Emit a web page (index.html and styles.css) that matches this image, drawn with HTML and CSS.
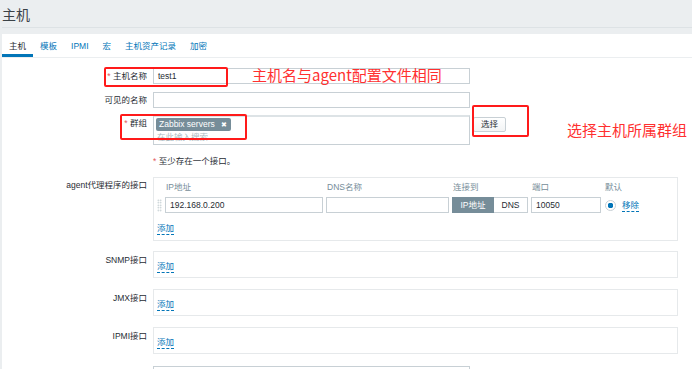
FILE: index.html
```html
<!DOCTYPE html>
<html lang="zh-CN">
<head>
<meta charset="utf-8">
<title>主机</title>
<link rel="stylesheet" href="styles.css">
</head>
<body>
<header class="hdr">
  <div class="hdr-bar"><h1 class="title">主机</h1></div>
</header>
<main class="panel">
  <nav class="tabs">
    <span class="tab active">主机</span>
    <span class="tab">模板</span>
    <span class="tab">IPMI</span>
    <span class="tab">宏</span>
    <span class="tab">主机资产记录</span>
    <span class="tab">加密</span>
  </nav>
  <div class="form">
    <div class="row r1">
      <div class="lbl"><span class="req">*</span> 主机名称</div>
      <div class="fld"><div class="inp">test1</div></div>
    </div>
    <div class="row r2">
      <div class="lbl">可见的名称</div>
      <div class="fld"><div class="inp"></div></div>
    </div>
    <div class="row r3">
      <div class="lbl"><span class="req">*</span> 群组</div>
      <div class="fld fld-ms">
        <div class="ms">
          <div class="tagline"><span class="tag">Zabbix servers<span class="tag-x">✖</span></span></div>
          <div class="ph">在此输入搜索</div>
        </div>
        <button class="btn">选择</button>
      </div>
    </div>
    <div class="row r4">
      <div class="lbl"></div>
      <div class="fld note"><span class="req">*</span> 至少存在一个接口。</div>
    </div>
    <div class="row r5">
      <div class="lbl">agent代理程序的接口</div>
      <div class="fld">
        <div class="box agent">
          <div class="itab">
            <span></span>
            <span class="th">IP地址</span>
            <span class="th">DNS名称</span>
            <span class="th">连接到</span>
            <span class="th">端口</span>
            <span class="th">默认</span>
            <span class="grip"></span>
            <div class="inp">192.168.0.200</div>
            <div class="inp"></div>
            <div class="seg"><span class="seg-on">IP地址</span><span class="seg-off">DNS</span></div>
            <div class="inp">10050</div>
            <div class="dflt"><span class="radio"></span><span class="link">移除</span></div>
          </div>
          <div class="addline"><span class="link">添加</span></div>
        </div>
      </div>
    </div>
    <div class="row r6">
      <div class="lbl">SNMP接口</div>
      <div class="fld"><div class="box small"><span class="link">添加</span></div></div>
    </div>
    <div class="row r7">
      <div class="lbl">JMX接口</div>
      <div class="fld"><div class="box small"><span class="link">添加</span></div></div>
    </div>
    <div class="row r8">
      <div class="lbl">IPMI接口</div>
      <div class="fld"><div class="box small"><span class="link">添加</span></div></div>
    </div>
    <div class="row r9">
      <div class="lbl"></div>
      <div class="fld"><div class="inp tall"></div></div>
    </div>
  </div>
</main>

<div class="mark mark1"></div>
<div class="mark mark2"></div>
<div class="mark mark3"></div>
<div class="note-red note1">主机名与agent配置文件相同</div>
<div class="note-red note2">选择主机所属群组</div>
</body>
</html>
```

FILE: styles.css
```css
* { box-sizing: border-box; }
html, body { margin: 0; padding: 0; }
body {
  background: #ebeef0;
  font-family: "Liberation Sans", "Noto Sans CJK SC", sans-serif;
  font-size: 8.5px;
  color: #1f2c33;
  width: 692px;
  height: 369px;
  overflow: hidden;
  position: relative;
}

.hdr { height: 34px; padding-left: 2px; }
.hdr-bar {
  height: 28px;
  border-bottom: 1px solid #dde2e5;
  display: flex;
  align-items: center;
}
.title {
  margin: 0;
  font-family: "Noto Sans CJK SC", sans-serif;
  font-size: 14px;
  font-weight: normal;
  line-height: 20px;
  color: #3b4247;
}

.panel {
  margin-left: 2px;
  background: #fff;
  height: 335px;
}

.tabs {
  display: flex;
  padding-top: 5px;
  border-bottom: 1px solid #ebeef0;
}
.tab {
  padding: 0 7px;
  line-height: 15px;
  border-bottom: 3px solid transparent;
  color: #0275b8;
}
.tab.active {
  color: #1f2c33;
  border-bottom-color: #0275b8;
}

.form { padding-top: 10px; }
.row {
  display: grid;
  grid-template-columns: 145px auto;
  column-gap: 6px;
  align-items: start;
}
.r2 { margin-top: 8px; }
.r3 { margin-top: 7px; }
.r4 { margin-top: 8px; }
.r5 { margin-top: 8px; }
.r6 { margin-top: 10px; }
.r7 { margin-top: 11px; }
.r8 { margin-top: 11px; }
.r9 { margin-top: 12px; }

.lbl {
  text-align: right;
  line-height: 16px;
  white-space: nowrap;
}
.r6 .lbl, .r7 .lbl, .r8 .lbl { line-height: 16px; padding-top: 1px; }
.req { color: #e45959; }

.inp {
  width: 317px;
  height: 16px;
  border: 1px solid #c8d0d5;
  background: #fff;
  line-height: 14px;
  padding-left: 4px;
  white-space: nowrap;
  overflow: hidden;
}
.inp.tall { height: 20px; }

.fld-ms { display: flex; align-items: flex-start; }
.ms {
  width: 317px;
  height: 30px;
  border: 1px solid #c8d0d5;
  border-top: 2px solid #dde3e6;
  padding: 1px 2px 0;
}
.tagline { height: 14px; }
.tag {
  display: inline-flex;
  align-items: center;
  height: 13px;
  background: #768d99;
  color: #fff;
  padding: 0 4px 0 3px;
  border-radius: 2px;
  line-height: 13px;
}
.tag-x { margin-left: 6px; font-size: 7px; }
.ph {
  color: #acbbc2;
  line-height: 10px;
  height: 10px;
  overflow: hidden;
  padding-left: 1px;
  font-size: 8.5px;
}
.btn {
  margin: 2px 0 0 3px;
  width: 33px;
  height: 15px;
  padding: 0;
  border: 1px solid #c8d0d5;
  border-radius: 2px;
  background: linear-gradient(#ffffff, #f2f4f5);
  font-family: inherit;
  font-size: 8.5px;
  color: #1f2c33;
  line-height: 13px;
}

.note { line-height: 16px; }

.box {
  width: 525px;
  border: 1px solid #e6e9eb;
  background: #fff;
}
.box.agent { height: 64px; padding: 3px 3px 0; }
.box.small { height: 27px; padding: 6px 3px 0; line-height: 16px; }

.itab {
  display: grid;
  grid-template-columns: 5px 158px 123px 76px 70px auto;
  grid-template-rows: 13px 16px;
  column-gap: 3px;
  row-gap: 3px;
}
.itab .inp { width: auto; }
.th {
  color: #768d99;
  line-height: 13px;
  padding-left: 1px;
  white-space: nowrap;
}
.grip {
  margin-top: 2px;
  height: 13px;
  background-image: radial-gradient(circle, #b6c2c8 0.7px, transparent 0.9px);
  background-size: 2.5px 2.5px;
}
.seg { display: flex; height: 16px; }
.seg-on {
  width: 42px;
  background: #768d99;
  color: #fff;
  text-align: center;
  line-height: 16px;
}
.seg-off {
  flex: 1;
  border: 1px solid #c8d0d5;
  border-left: none;
  text-align: center;
  line-height: 14px;
}
.dflt { display: flex; align-items: center; height: 16px; padding-left: 1px; }
.radio {
  width: 11px;
  height: 11px;
  border-radius: 50%;
  border: 1px solid #c8d0d5;
  background: radial-gradient(circle, #0275b8 2.6px, #fff 3px);
  margin-right: 6px;
}
.link {
  color: #0275b8;
  border-bottom: 1px dashed #0275b8;
  line-height: 12px;
  display: inline-block;
}
.addline { margin-top: 7px; line-height: 16px; }

.mark {
  position: absolute;
  border: 2px solid #ff1a1a;
  border-radius: 2px;
}
.mark1 { left: 104px; top: 67px; width: 124px; height: 20px; }
.mark2 { left: 120px; top: 114px; width: 127px; height: 26px; }
.mark3 { left: 472px; top: 105px; width: 57px; height: 32px; }

.note-red {
  position: absolute;
  font-family: "Noto Sans CJK SC", sans-serif;
  font-size: 15px;
  line-height: 20px;
  color: #ff3030;
  white-space: nowrap;
}
.note1 { left: 252px; top: 65px; }
.note2 { left: 567px; top: 120px; }
```
